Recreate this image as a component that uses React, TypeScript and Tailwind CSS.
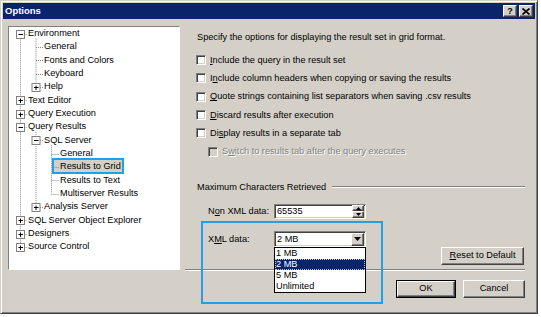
import React from "react";

type TNode = { l: number; t: string; e?: "+" | "-"; sel?: boolean };

const nodes: TNode[] = [
  { l: 0, t: "Environment", e: "-" },
  { l: 1, t: "General" },
  { l: 1, t: "Fonts and Colors" },
  { l: 1, t: "Keyboard" },
  { l: 1, t: "Help", e: "+" },
  { l: 0, t: "Text Editor", e: "+" },
  { l: 0, t: "Query Execution", e: "+" },
  { l: 0, t: "Query Results", e: "-" },
  { l: 1, t: "SQL Server", e: "-" },
  { l: 2, t: "General" },
  { l: 2, t: "Results to Grid", sel: true },
  { l: 2, t: "Results to Text" },
  { l: 2, t: "Multiserver Results" },
  { l: 1, t: "Analysis Server", e: "+" },
  { l: 0, t: "SQL Server Object Explorer", e: "+" },
  { l: 0, t: "Designers", e: "+" },
  { l: 0, t: "Source Control", e: "+" },
];

const RH = 13.33;
const rc = (i: number) => RH * i + RH / 2;
const bx = (l: number) => 11.5 + 15.5 * l;
const tx = (l: number) => 19 + 16 * l;

function TreeLines() {
  const dot = { stroke: "#8a8a8a", strokeWidth: 1, strokeDasharray: "1 1" };
  const v: [number, number, number][] = [
    [bx(0), rc(0), rc(16)],
    [bx(1), rc(0) + 5, rc(4)],
    [bx(1), rc(7) + 5, rc(13)],
    [bx(2), rc(8) + 5, rc(12)],
  ];
  return (
    <svg className="absolute left-0 top-0" width="170" height="242">
      {v.map(([x, a, b], k) => (
        <line key={"v" + k} x1={x} x2={x} y1={a} y2={b} {...dot} />
      ))}
      {nodes.map((n, i) => (
        <line
          key={"h" + i}
          x1={bx(n.l)}
          x2={tx(n.l) - 1}
          y1={Math.round(rc(i)) + 0.5}
          y2={Math.round(rc(i)) + 0.5}
          {...dot}
        />
      ))}
      {nodes.map((n, i) => {
        if (!n.e) return null;
        const cx = bx(n.l);
        const cy = Math.round(rc(i)) + 0.5;
        return (
          <g key={"b" + i}>
            <rect x={cx - 4} y={cy - 4} width="8" height="8" fill="#fff" stroke="#808080" />
            <line x1={cx - 2} x2={cx + 2.5} y1={cy} y2={cy} stroke="#000" />
            {n.e === "+" && <line x1={cx} x2={cx} y1={cy - 2} y2={cy + 2.5} stroke="#000" />}
          </g>
        );
      })}
    </svg>
  );
}

function Tree() {
  return (
    <div className="relative mt-[7px] ml-[5px] h-[244px] w-[172px] shrink-0 border border-t-[#808080] border-l-[#808080] border-r-white border-b-white bg-white">
      <div className="relative h-full w-full overflow-hidden">
        <div className="absolute left-[43px] top-[131px] h-[16px] w-[72px] border-2 border-[#20a0e8] bg-[#d4d0c8]" />
        <TreeLines />
        <div className="relative flex flex-col">
          {nodes.map((n, i) => (
            <div
              key={i}
              className="relative h-[13.33px] whitespace-nowrap leading-[13.33px] text-black"
              style={{ paddingLeft: tx(n.l) }}
            >
              {n.t}
            </div>
          ))}
        </div>
      </div>
    </div>
  );
}

function Check({ label, disabled }: { label: React.ReactNode; disabled?: boolean }) {
  return (
    <div className={"flex h-[18.33px] items-center gap-[4px] " + (disabled ? "pl-[23px]" : "pl-[11px]")}>
      <div
        className={
          "h-[10px] w-[10px] border border-t-[#808080] border-l-[#808080] border-r-white border-b-white shadow-[inset_1px_1px_0_#404040,inset_-1px_-1px_0_#d4d0c8] " +
          (disabled ? "bg-[#d4d0c8]" : "bg-white")
        }
      />
      <span
        className={
          "whitespace-nowrap leading-[11px] " +
          (disabled ? "text-[#808080] [text-shadow:1px_1px_0_#fff]" : "text-black")
        }
      >
        {label}
      </span>
    </div>
  );
}

const raised =
  "border border-t-white border-l-white border-r-[#404040] border-b-[#404040] shadow-[inset_-1px_-1px_0_#808080,inset_1px_1px_0_#d4d0c8] bg-[#d4d0c8]";

function Arrow({ up }: { up?: boolean }) {
  return (
    <svg width="5" height="3" viewBox="0 0 5 3">
      {up ? <polygon points="2.5,0 5,3 0,3" fill="#000" /> : <polygon points="0,0 5,0 2.5,3" fill="#000" />}
    </svg>
  );
}

const sunken =
  "border border-t-[#808080] border-l-[#808080] border-r-white border-b-white shadow-[inset_1px_1px_0_#404040,inset_-1px_-1px_0_#d4d0c8] bg-white";

export default function App() {
  return (
    <div className="h-[317px] w-[541px] bg-white text-[9.2px] [font-family:'Liberation_Sans',Arial,sans-serif]">
      <div className="relative flex h-[314px] w-[538px] flex-col border border-t-[#d4d0c8] border-l-[#d4d0c8] border-r-[#404040] border-b-[#404040] bg-[#d4d0c8] p-[2px] shadow-[inset_1px_1px_0_#fff,inset_-1px_-1px_0_#808080]">
        {/* title bar */}
        <div className="flex h-[16px] shrink-0 items-center justify-between bg-[#0a246a] pl-[2px] pr-[2px]">
          <span className="text-[9.5px] font-bold leading-[16px] text-white">Options</span>
          <div className="flex gap-[2px]">
            <div className={"flex h-[12px] w-[14px] items-center justify-center text-[9px] font-bold leading-none text-black " + raised}>
              ?
            </div>
            <div className={"flex h-[12px] w-[14px] items-center justify-center " + raised}>
              <svg width="8" height="7" viewBox="0 0 8 7">
                <path d="M0.5 0.5 L7.5 6.5 M7.5 0.5 L0.5 6.5" stroke="#000" strokeWidth="1.6" />
              </svg>
            </div>
          </div>
        </div>

        {/* body */}
        <div className="flex flex-1">
          <Tree />

          <div className="relative ml-[5px] flex w-[340px] flex-col">
            <div className="mt-[13px] pl-[12px] leading-[11px] text-black">
              Specify the options for displaying the result set in grid format.
            </div>

            <div className="mt-[8px] flex flex-col">
              <Check label={<><u>I</u>nclude the query in the result set</>} />
              <Check label={<>I<u>n</u>clude column headers when copying or saving the results</>} />
              <Check label={<><u>Q</u>uote strings containing list separators when saving .csv results</>} />
              <Check label={<><u>D</u>iscard results after execution</>} />
              <Check label={<>Di<u>s</u>play results in a separate tab</>} />
              <Check disabled label={<>S<u>w</u>itch to results tab after the query executes</>} />
            </div>

            <div className="mt-[21px] flex items-center pl-[12px]">
              <span className="whitespace-nowrap leading-[11px]">Maximum Characters Retrieved</span>
              <div className="ml-[6px] flex-1 border-t border-b border-t-[#808080] border-b-white" />
            </div>

            <div className="mt-[11px] flex items-center pl-[23px]">
              <span className="w-[66px] whitespace-nowrap">
                N<u>o</u>n XML data:
              </span>
              <div className={"flex h-[15px] w-[92px] items-center justify-between " + sunken}>
                <span className="pl-[2px] leading-[11px]">65535</span>
                <div className="mr-[1px] flex flex-col">
                  <div className={"flex h-[6.5px] w-[12px] items-center justify-center " + raised}>
                    <Arrow up />
                  </div>
                  <div className={"flex h-[6.5px] w-[12px] items-center justify-center " + raised}>
                    <Arrow />
                  </div>
                </div>
              </div>
            </div>

            <div className="mt-[12.5px] flex items-start justify-between">
              <div className="flex items-center pl-[23px]">
                <span className="w-[66px] whitespace-nowrap">
                  X<u>M</u>L data:
                </span>
                <div className="relative">
                  <div className={"flex h-[16px] w-[92px] items-center justify-between " + sunken}>
                    <span className="pl-[2px] leading-[11px]">2 MB</span>
                    <div className={"mr-[1px] flex h-[13px] w-[13px] items-center justify-center " + raised}>
                      <svg width="7" height="4" viewBox="0 0 7 4">
                        <polygon points="0,0 7,0 3.5,4" fill="#000" />
                      </svg>
                    </div>
                  </div>
                  <div className="absolute left-0 top-[16px] z-10 flex w-[92px] flex-col border border-black bg-white">
                    <div className="flex h-[11px] items-center pl-[1px]">1 MB</div>
                    <div className="flex h-[11px] items-center border border-dotted border-[#c8c8c8] bg-[#0a246a] text-white">
                      2 MB
                    </div>
                    <div className="flex h-[11px] items-center pl-[1px]">5 MB</div>
                    <div className="flex h-[11px] items-center pl-[1px]">Unlimited</div>
                  </div>
                </div>
              </div>
              <div className={"mr-[1px] mt-[15.7px] flex h-[18.3px] w-[83px] items-center justify-center " + raised}>
                <span><u>R</u>eset to Default</span>
              </div>
            </div>

            <div className="mt-[4px] border-t border-b border-t-[#808080] border-b-white" />

            <div className="mt-[9px] flex justify-end gap-[7px]">
              <div className="flex h-[17.3px] w-[60px] items-center justify-center border border-black">
                <div className={"flex h-full w-full items-center justify-center " + raised}>OK</div>
              </div>
              <div className={"flex h-[17.3px] w-[62px] items-center justify-center " + raised}>Cancel</div>
            </div>

            <div className="pointer-events-none absolute left-[16px] top-[202px] z-20 h-[83px] w-[182px] border-2 border-[#20a0e8]" />
          </div>
        </div>
      </div>
    </div>
  );
}
